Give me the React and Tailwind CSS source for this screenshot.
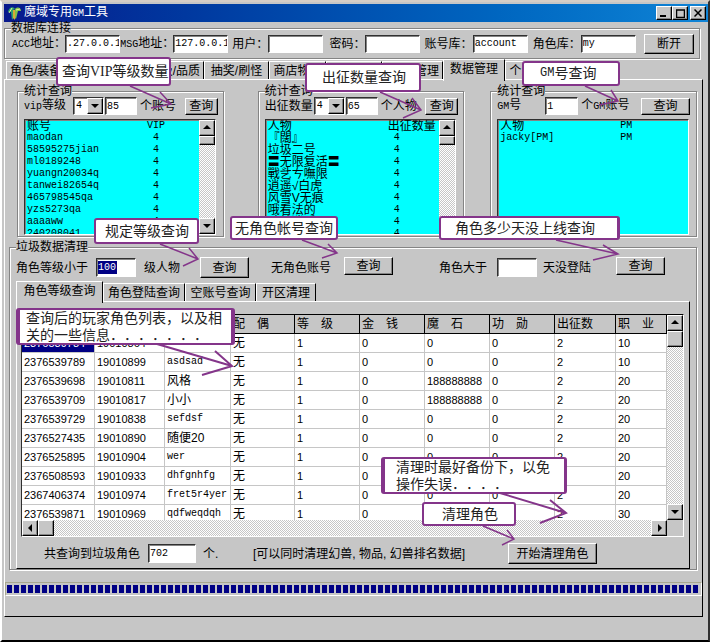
import { useState } from 'react';
import clsx from 'clsx';

const raised = 'bg-[#c6c6c6] border border-t-white border-l-white border-r-black border-b-black shadow-[inset_-1px_-1px_0_#848484]';
const sunken = 'border border-t-[#303030] border-l-[#303030] border-r-white border-b-white shadow-[inset_1px_1px_0_#848484]';
const mono = 'font-["Liberation_Mono","Noto_Sans_CJK_SC",monospace] text-[10px]';

const vipRows = [
  ['maodan', '4'],
  ['58595275jian', '4'],
  ['ml0189248', '4'],
  ['yuangn20034q', '4'],
  ['tanwei82654q', '4'],
  ['465798545qa', '4'],
  ['yzs5273qa', '4'],
  ['aaaaww', '4'],
  ['240208041', '4'],
];

const petRows = [
  ['『闊』', '4'],
  ['垃圾二号', '4'],
  ['〓无限复活〓', '4'],
  ['戰乧ㄘ嘸限', '4'],
  ['逍遥√白虎', '4'],
  ['风雪V无痕', '4'],
  ['哦看法的', '4'],
  ['醉梦逍遥', '4'],
  ['小风', '4'],
];

const gmRows = [['jacky[PM]', 'PM']];

const headers = ['账号ID', '角色ID', '名　称', '配　偶', '等　级', '金　钱', '魔　石', '功　勋', '出征数', '职　业'];

const roles = [
  ['2376539784', '19010864', 'lush', '0', '10'],
  ['2376539789', '19010899', 'asdsad', '0', '10'],
  ['2376539698', '19010811', '风格', '188888888', '20'],
  ['2376539709', '19010817', '小小', '188888888', '20'],
  ['2376539729', '19010838', 'sefdsf', '0', '20'],
  ['2376527435', '19010890', '随便20', '0', '20'],
  ['2376525895', '19010904', 'wer', '0', '20'],
  ['2376508593', '19010933', 'dhfgnhfg', '0', '20'],
  ['2367406374', '19010974', 'fret5r4yer', '0', '20'],
  ['2376539871', '19010969', 'qdfweqdqh', '0', '30'],
];

const isLatin = (text) => /^[\w[\]]+$/.test(text);

const En = ({ children }) => <span className={mono}>{children}</span>;

const Button = ({ className, children, ...rest }) => (
  <button className={clsx(raised, 'flex shrink-0 items-center justify-center whitespace-nowrap', className)} {...rest}>
    {children}
  </button>
);

const Input = ({ className, ...rest }) => (
  <input className={clsx(sunken, mono, 'shrink-0 bg-white pl-px outline-none', className)} {...rest} />
);

const Group = ({ title, className, children }) => (
  <fieldset className={clsx('min-w-0 border border-[#848484] shadow-[1px_1px_0_#fff,inset_1px_1px_0_#fff]', className)}>
    <legend className="ml-[6px] h-3 bg-[#c6c6c6] leading-3">{title}</legend>
    {children}
  </fieldset>
);

const Arrow = ({ dir }) => {
  const shapes = {
    up: '0,5 4,1 8,5',
    down: '0,2 4,6 8,2',
    left: '6,0 2,4 6,8',
    right: '3,0 7,4 3,8',
  };
  return (
    <svg width="8" height="8" viewBox="0 0 8 8" aria-hidden="true">
      <polygon points={shapes[dir]} fill="#000" />
    </svg>
  );
};

const track = 'bg-[repeating-conic-gradient(#fff_0_25%,#c6c6c6_0_50%)] bg-[length:2px_2px]';

const VScroll = ({ thumb }) => (
  <div className={clsx(track, 'flex w-4 shrink-0 flex-col')}>
    <Button className="h-4 w-4" aria-label="上"><Arrow dir="up" /></Button>
    <div className={clsx(raised, thumb)} />
    <Button className="mt-auto h-4 w-4" aria-label="下"><Arrow dir="down" /></Button>
  </div>
);

const ListBox = ({ head, rows, scroll }) => (
  <div className={clsx(sunken, 'mt-1 flex h-[116px] overflow-hidden bg-[#00ffff]')}>
    <div className="min-w-0 flex-1 overflow-hidden">
      <table className="w-full table-fixed leading-3">
        <thead>
          <tr className="h-3">
            <th className="w-[122px] p-0 pl-[2px] text-left font-normal">{head[0]}</th>
            <th className={clsx('p-0 text-left font-normal whitespace-nowrap', isLatin(head[1]) && mono)}>{head[1]}</th>
          </tr>
        </thead>
        <tbody>
          {rows.map(([name, value]) => (
            <tr key={name} className="h-3">
              <td className={clsx('p-0 pl-[2px] whitespace-nowrap', isLatin(name) && mono)}>{name}</td>
              <td className={clsx('p-0', mono, value.length === 1 && 'pl-[6px]')}>{value}</td>
            </tr>
          ))}
        </tbody>
      </table>
    </div>
    {scroll && <VScroll thumb="h-[9px]" />}
  </div>
);

const LevelSelect = ({ label }) => (
  <div className="relative w-[31px] shrink-0">
    <select aria-label={label} defaultValue="4" className={clsx(sunken, mono, 'block h-[18px] w-full appearance-none bg-white pl-[2px]')}>
      <option>4</option>
      <option>5</option>
      <option>6</option>
    </select>
    <span className={clsx(raised, 'pointer-events-none absolute top-px right-px flex h-4 w-4 items-center justify-center')}>
      <Arrow dir="down" />
    </span>
  </div>
);

const Tab = ({ active, className, children, ...rest }) => (
  <button
    role="tab"
    aria-selected={active}
    className={clsx(
      'shrink-0 overflow-hidden whitespace-nowrap border-t border-l border-r border-t-white border-l-white border-r-black bg-[#c6c6c6] px-[3px]',
      active ? 'relative z-10 -mb-[2px] h-[22px] pb-[4px]' : 'h-[18px]',
      className
    )}
    {...rest}
  >
    {children}
  </button>
);

const DbField = ({ id, label, value, className }) => (
  <div className="flex items-center">
    <label htmlFor={id} className={clsx('shrink-0 text-right whitespace-nowrap', className)}>{label}</label>
    <Input id={id} defaultValue={value} className="h-[18px] w-[55px]" />
  </div>
);

const Callout = ({ className, children }) => (
  <div className={clsx('absolute flex items-center rounded-[3px] border-2 border-[#84358a] bg-white text-[14px] leading-[17px] whitespace-nowrap text-[#222] [text-spacing-trim:space-all]', className)}>
    {children}
  </div>
);

const arrows = [
  'M130 86 L171 104 M160 92 L171 104 L151 108',
  'M380 92 L421 110 M412 98 L421 110 L403 118',
  'M585 86 L618 101 M611 90 L618 101 L599 105',
  'M160 244 L198 259 M189 248 L198 259 L183 266',
  'M302 240 L337 253 M328 244 L337 253 L322 258',
  'M556 240 L618 254 M603 245 L618 254 L593 260',
  'M483 526 L514 539 M507 530 L514 539 L502 545',
];
const thickArrows = [
  'M157 344 L232 366 M215 351 L232 366 L202 375',
  'M500 493 L566 513 M550 500 L566 513 L540 523',
];

const mainTabs = [
  ['角色/装备', 'w-[66px] text-left'],
  ['技能/等级/品质', 'w-[132px] text-right'],
  ['抽奖/刷怪', 'w-[65px]'],
  ['商店物品', 'w-[57px]'],
  ['任务管理', 'w-[56px]'],
  ['公告管理', 'w-[61px] text-right'],
  ['数据管理', 'w-[62px]'],
  ['个人设置', 'w-[57px]'],
];
const cleanTabs = [
  ['角色等级查询', 'w-[87px]'],
  ['角色登陆查询', 'w-[82px]'],
  ['空账号查询', 'w-[71px]'],
  ['开区清理', 'w-[60px]'],
];

export default function App() {
  const [mainTab, setMainTab] = useState('数据管理');
  const [cleanTab, setCleanTab] = useState('角色等级查询');

  return (
    <div className='relative flex min-h-screen flex-col overflow-hidden border-2 border-t-[#d6cec6] border-l-white border-r-[#303030] border-b-black bg-[#c6c6c6] pt-[2px] pl-[2px] font-["Liberation_Sans","Noto_Sans_CJK_SC",sans-serif] text-[12px] leading-4 text-black'>
      <header className="flex h-[18px] items-center bg-linear-to-r from-[#08188c] to-[#1084d6] pr-[2px] pl-[3px] text-white">
        <svg width="15" height="16" viewBox="0 0 15 16" className="mr-[2px]" aria-hidden="true">
          <path d="M1 7 C2 2 6 1 8 4 L6 5 L7 12 L5 15 L4 7 Z" fill="#2fa36b" />
          <path d="M8 4 C11 1 14 3 14 6 L11 6 L9 14 L7 12 Z" fill="#7fc04a" />
          <path d="M2 8 L5 3 M9 5 L13 4" stroke="#e8f4a0" strokeWidth="1" />
          <path d="M6 5 L8 5 L8 15 L6 13 Z" fill="#d8a838" />
        </svg>
        <h1 className="flex-1 text-[12px]">魔域专用<En>GM</En>工具</h1>
        <Button className="h-[14px] w-4" aria-label="最小化">
          <svg width="8" height="8"><path d="M0 7h6" stroke="#000" strokeWidth="2" /></svg>
        </Button>
        <Button className="h-[14px] w-4" aria-label="最大化">
          <svg width="9" height="9"><path d="M0 1h9M0.5 1v8M8.5 1v8M0 8.5h9" stroke="#000" strokeWidth="1.5" fill="none" /></svg>
        </Button>
        <Button className="ml-[2px] h-[14px] w-4" aria-label="关闭">
          <svg width="8" height="8"><path d="M0.5 0.5l7 7M7.5 0.5l-7 7" stroke="#000" strokeWidth="1.5" /></svg>
        </Button>
      </header>

      <Group title="数据库连接" className="mr-2">
        <div className="flex h-5 items-center justify-between pr-[5px] pb-px pl-[7px]">
          <DbField id="acc" label={<><En>ACC</En>地址：</>} value=".27.0.0.1" className="w-[53px]" />
          <DbField id="msg" label={<><En>MSG</En>地址：</>} value="127.0.0.1" className="w-[53px]" />
          <DbField id="user" label="用户：" value="" className="w-10" />
          <DbField id="pass" label="密码：" value="" className="w-[42px]" />
          <DbField id="accdb" label="账号库：" value="account" className="w-[52px]" />
          <DbField id="roledb" label="角色库：" value="my" className="w-[53px]" />
          <Button className="ml-2 h-5 w-[50px]">断开</Button>
        </div>
        <div className="h-[4px]" />
      </Group>

      <div role="tablist" className="flex h-5 items-end pl-[2px]">
        {mainTabs.map(([name, width]) => (
          <Tab key={name} className={width} active={mainTab === name} onClick={() => setMainTab(name)}>
            {name}
          </Tab>
        ))}
      </div>

      <main className="mr-[5px] border border-t-white border-l-white border-r-black border-b-black pt-[5px] pb-5">
        <div className="flex pr-[5px] pl-3">
          <Group title="统计查询" className="flex-1">
            <div className="flex h-[18px] items-center pr-[5px] pl-[6px]">
              <span className="w-[49px] whitespace-nowrap"><En>vip</En>等级</span>
              <LevelSelect label="vip等级" />
              <Input aria-label="账号数量" defaultValue="85" className="ml-px h-[18px] w-8" />
              <span className="ml-[3px] whitespace-nowrap">个账号</span>
              <Button className="ml-auto h-[17px] w-[33px]">查询</Button>
            </div>
            <div className="pr-[7px] pb-px pl-[6px]">
              <ListBox head={['账号', 'VIP']} rows={vipRows} scroll />
            </div>
          </Group>

          <Group title="统计查询" className="ml-[34px] flex-1">
            <div className="flex h-[18px] items-center pr-[5px] pl-[6px]">
              <span className="w-[49px] whitespace-nowrap">出征数量</span>
              <LevelSelect label="出征数量" />
              <Input aria-label="人物数量" defaultValue="65" className="ml-px h-[18px] w-8" />
              <span className="ml-[3px] whitespace-nowrap">个人物</span>
              <Button className="ml-auto h-[17px] w-[33px]">查询</Button>
            </div>
            <div className="pr-[7px] pb-px pl-[6px]">
              <ListBox head={['人物', '出征数量']} rows={petRows} scroll />
            </div>
          </Group>

          <Group title="统计查询" className="ml-[26px] flex-1">
            <div className="flex h-[18px] items-center pr-[6px] pl-[6px]">
              <label htmlFor="gm" className="w-12 whitespace-nowrap"><En>GM</En>号</label>
              <Input id="gm" defaultValue="1" className="h-[18px] w-[33px]" />
              <span className="ml-[3px] whitespace-nowrap">个<En>GM</En>账号</span>
              <Button className="ml-auto h-[17px] w-[49px]">查询</Button>
            </div>
            <div className="pr-[7px] pb-px pl-[6px]">
              <ListBox head={['人物', 'PM']} rows={gmRows} />
            </div>
          </Group>
        </div>

        <Group title="垃圾数据清理" className="mt-1 mr-[5px] ml-1">
          <div className="mt-1 flex h-[21px] items-center pl-[6px] whitespace-nowrap">
            <label htmlFor="level" className="w-20">角色等级小于</label>
            <div className={clsx(sunken, 'flex h-[19px] w-10 items-center bg-white pl-px')}>
              <input id="level" defaultValue="100" className={clsx(mono, 'h-[13px] w-[19px] bg-[#000084] text-white outline-none')} />
            </div>
            <span className="ml-2 w-14">级人物</span>
            <Button className="h-[21px] w-[49px]">查询</Button>
            <span className="ml-[22px] w-[73px]">无角色账号</span>
            <Button className="h-[18px] w-[49px] self-start">查询</Button>
            <label htmlFor="days" className="ml-[46px] w-[58px]">角色大于</label>
            <Input id="days" className="h-[19px] w-10" />
            <span className="ml-[6px] w-[73px]">天没登陆</span>
            <Button className="h-[18px] w-[49px] self-start">查询</Button>
          </div>

          <div role="tablist" className="mt-[3px] flex h-5 items-end pl-[6px]">
            {cleanTabs.map(([name, width]) => (
              <Tab key={name} className={width} active={cleanTab === name} onClick={() => setCleanTab(name)}>
                {name}
              </Tab>
            ))}
          </div>

          <div className="mr-[6px] ml-[6px] border border-t-white border-l-white border-r-black border-b-black pt-3 pr-[5px] pb-1 pl-1">
            <div className="border border-t-black border-l-[#303030] border-r-white border-b-white">
              <div className="flex h-[205px]">
                <div className="min-w-0 flex-1 overflow-hidden bg-white">
                  <table className="w-full table-fixed border-separate border-spacing-0">
                    <colgroup>
                      <col className="w-[73px]" />
                      <col className="w-[70px]" />
                      <col className="w-[66px]" />
                      <col className="w-[64px]" />
                      <col className="w-[65px]" />
                      <col className="w-[65px]" />
                      <col className="w-[65px]" />
                      <col className="w-[65px]" />
                      <col className="w-[61px]" />
                      <col />
                    </colgroup>
                    <thead>
                      <tr className="h-[19px]">
                        {headers.map((h) => (
                          <th key={h} className="overflow-hidden border-r border-b border-black bg-[#c6c6c6] p-0 pl-[2px] text-left leading-4 font-normal whitespace-nowrap">
                            {h}
                          </th>
                        ))}
                      </tr>
                    </thead>
                    <tbody>
                      {roles.map(([account, role, name, stone, job], i) => (
                        <tr key={role} className="h-[19px]">
                          {[account, role, name, '无', '1', '0', stone, '0', '2', job].map((cell, c) => (
                            <td
                              key={c}
                              className={clsx(
                                'overflow-hidden border-r border-b border-[#c6c6c6] p-0 pl-[2px] leading-4 whitespace-nowrap',
                                i === 0 && c === 0 && 'bg-[#000084] text-white',
                                c === 2 ? isLatin(cell) && mono : cell !== '无' && 'text-[11px]'
                              )}
                            >
                              {cell}
                            </td>
                          ))}
                        </tr>
                      ))}
                    </tbody>
                  </table>
                </div>
                <VScroll thumb="h-4" />
              </div>
              <div className="flex h-4 pr-4">
                <div className={clsx(track, 'flex flex-1')}>
                  <Button className="h-4 w-4" aria-label="左"><Arrow dir="left" /></Button>
                  <div className={clsx(raised, 'w-4')} />
                  <Button className="ml-auto h-4 w-4" aria-label="右"><Arrow dir="right" /></Button>
                </div>
              </div>
            </div>

            <div className="mt-[6px] flex h-[21px] items-center pl-[23px] whitespace-nowrap">
              <label htmlFor="total" className="w-[104px]">共查询到垃圾角色</label>
              <Input id="total" defaultValue="702" className="h-[19px] w-12" />
              <span className="ml-[7px] w-[50px]">个.</span>
              <span className="w-[255px]">[可以同时清理幻兽, 物品, 幻兽排名数据]</span>
              <Button className="h-[21px] w-[89px]">开始清理角色</Button>
            </div>
          </div>
        </Group>

        <div
          role="progressbar"
          aria-valuenow={100}
          className="mt-3 h-[14px] border border-t-[#a8a890] border-l-[#a8a890] border-r-white border-b-white px-px py-[2px]"
        >
          <div className="h-full bg-[repeating-linear-gradient(90deg,#000084_0_5px,#c6c6c6_5px_7px)]" />
        </div>
      </main>

      {/* help notes on top of the window */}
      <div className='pointer-events-none absolute -top-[2px] -left-[2px] z-20 h-[642px] w-[710px] font-["Liberation_Serif","Noto_Sans_CJK_SC",serif]'>
        <Callout className="top-[57px] left-[56px] h-[29px] w-[115px] pl-1">查询VIP等级数量</Callout>
        <Callout className="top-[63px] left-[305px] h-[29px] w-[116px] pl-[15px]">出征数量查询</Callout>
        <Callout className="top-[61px] left-[522px] h-[25px] w-[98px] pl-4">
          <span className='font-["Liberation_Mono",monospace] text-[12px]'>GM</span>号查询
        </Callout>
        <Callout className="top-[218px] left-[94px] h-[26px] w-[105px] pl-[9px]">规定等级查询</Callout>
        <Callout className="top-[216px] left-[230px] h-6 w-[108px] pl-[3px]">无角色帐号查询</Callout>
        <Callout className="top-[216px] left-[439px] h-6 w-[181px] border-r-[3px] pl-[14px]">角色多少天没上线查询</Callout>
        <Callout className="top-[308px] left-[16px] h-[37px] w-[219px] border-r-4 border-l-4 pl-[6px]">
          查询后的玩家角色列表，以及相<br />关的一些信息．．．．．．．
        </Callout>
        <Callout className="top-[457px] left-[381px] h-[37px] w-[186px] border-r-[3px] border-l-4 pl-[11px]">
          清理时最好备份下，以免<br />操作失误．．．．
        </Callout>
        <Callout className="top-[502px] left-[422px] h-6 w-[94px] border pl-[18px]">清理角色</Callout>
        <svg width="710" height="642" className="absolute top-0 left-0" fill="none" stroke="#84358a" aria-hidden="true">
          {arrows.map((d) => <path key={d} d={d} strokeWidth="1.5" />)}
          {thickArrows.map((d) => <path key={d} d={d} strokeWidth="2" />)}
        </svg>
      </div>
    </div>
  );
}
